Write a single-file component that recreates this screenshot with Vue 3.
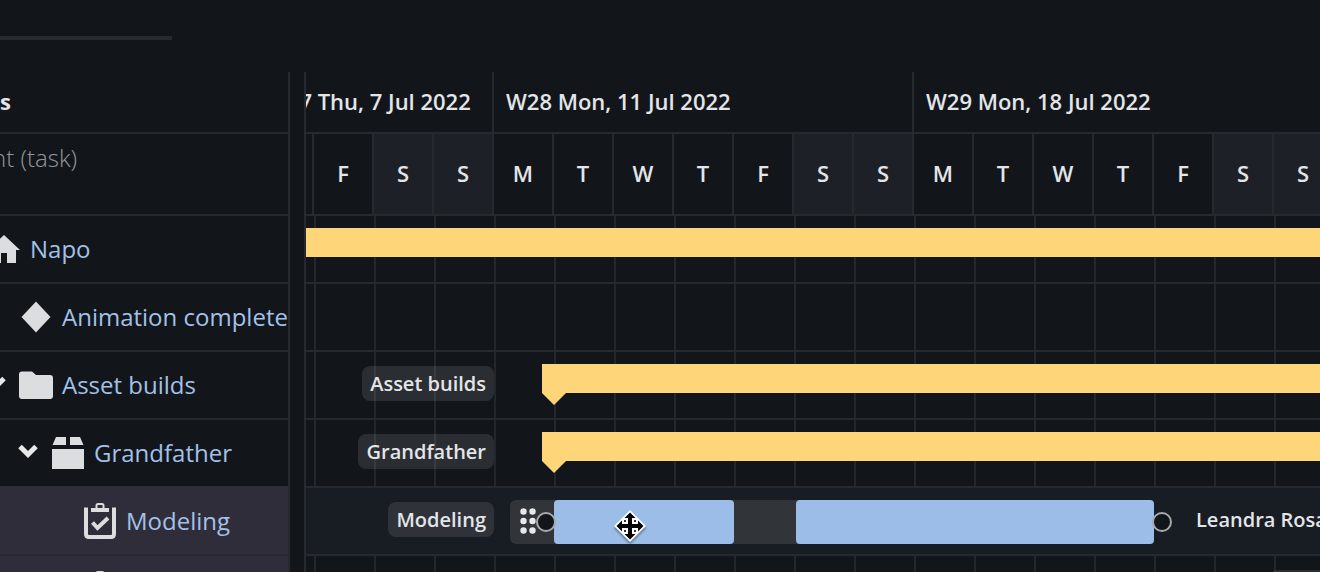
<template>
  <div class="page">
    <div class="topbar">
      <div class="tab-line"></div>
    </div>
    <div class="gantt">
      <div class="list">
        <div class="list-scroll">
          <div class="list-head">s</div>
          <div class="list-filter">
            <input type="text" aria-label="Filter" placeholder="nt (task)">
          </div>
          <div
            class="list-row"
            v-for="row in rows"
            :key="row.id"
            :class="{ selected: row.selected }"
            :style="{ paddingLeft: row.level * 32 + 'px' }"
          >
            <button v-if="row.open" class="toggle" type="button" :aria-label="row.name" @click="selectedId = row.id">
              <svg width="20" height="16" viewBox="0 0 20 16">
                <path d="M2 3.5L10 11.5L18 3.5" fill="none" stroke="currentColor" stroke-width="5" />
              </svg>
            </button>
            <span v-else class="toggle"></span>
            <span class="icon">
              <svg v-if="row.icon === 'home'" width="34" height="28" viewBox="0 0 34 28">
                <path d="M17 0L33 15H29V28H20V18H14V28H5V15H1Z" fill="currentColor" />
              </svg>
              <svg v-else-if="row.icon === 'milestone'" width="30" height="32" viewBox="0 0 30 32">
                <path d="M15 0.5L29.5 16L15 31.5L0.5 16Z" fill="currentColor" />
              </svg>
              <svg v-else-if="row.icon === 'folder'" width="34" height="28" viewBox="0 0 34 28">
                <path d="M3 0.5H13L17 4H31Q34 4 34 7V25Q34 28 31 28H3Q0 28 0 25V3.5Q0 0.5 3 0.5Z" fill="currentColor" />
              </svg>
              <svg v-else-if="row.icon === 'box'" width="32" height="32" viewBox="0 0 32 32">
                <path d="M4 0H14V8H0.5ZM18 0H28L31.5 8H18ZM0 12H32V32H0Z" fill="currentColor" />
              </svg>
              <svg v-else width="32" height="36" viewBox="0 0 32 36">
                <path d="M2 4.5V31Q2 34 5 34H27Q30 34 30 31V4.5" fill="none" stroke="currentColor" stroke-width="4" />
                <path d="M7 5H11.5V2.5Q11.5 0 14 0H18Q20.5 0 20.5 2.5V5H25V9H7ZM13.5 5H18.5V2H13.5Z" fill="currentColor" fill-rule="evenodd" />
                <path d="M8.5 19.5L13.5 25L24 15" fill="none" stroke="currentColor" stroke-width="4" />
              </svg>
            </span>
            <a class="name" href="#" @click.prevent="selectedId = row.id">{{ row.name }}</a>
          </div>
        </div>
      </div>

      <div class="splitter"></div>

      <div class="timeline">
        <div class="timeline-scroll">
          <div class="weeks">
            <div class="week" v-for="week in weeks" :key="week.label" :style="{ width: week.days * dayWidth + 'px' }">
              {{ week.label }}
            </div>
          </div>
          <div class="days">
            <div class="day" v-for="(day, index) in days" :key="index" :class="{ weekend: day === 'S' }">{{ day }}</div>
          </div>
          <div class="lane" v-for="row in rows" :key="row.id" :class="{ active: row.id === selectedId }">
            <div class="cell" v-for="(day, index) in days" :key="index"></div>

            <div v-if="row.summary" class="summary" :style="{ left: row.start + 'px' }">
              <svg class="tip" width="24" height="12" viewBox="0 0 24 12">
                <path d="M0 0H24L12 12Z" fill="currentColor" />
              </svg>
            </div>
            <span v-if="row.tag" class="tag">{{ row.name }}</span>

            <template v-if="row.parts">
              <div class="track" :style="{ left: row.start - 44 + 'px', width: row.length + 44 + 'px' }">
                <svg class="grip" width="16" height="26" viewBox="0 0 16 26">
                  <g fill="#e6e8ea">
                    <circle cx="3.5" cy="3.5" r="3.2" /><circle cx="12.5" cy="3.5" r="3.2" />
                    <circle cx="3.5" cy="13" r="3.2" /><circle cx="12.5" cy="13" r="3.2" />
                    <circle cx="3.5" cy="22.5" r="3.2" /><circle cx="12.5" cy="22.5" r="3.2" />
                  </g>
                </svg>
              </div>
              <div
                class="part"
                v-for="part in row.parts"
                :key="part.left"
                :style="{ left: part.left + 'px', width: part.width + 'px' }"
              ></div>
              <span class="knob" :style="{ left: row.start - 18 + 'px' }"></span>
              <span class="knob" :style="{ left: row.start + row.length - 2 + 'px' }"></span>
              <span class="assignee" :style="{ left: row.start + row.length + 42 + 'px' }">{{ row.assignee }}</span>
              <svg class="move" :style="{ left: row.start + 58 + 'px' }" width="36" height="36" viewBox="0 0 36 36">
                <path d="M18 2L34 18L18 34L2 18Z" fill="#fff" />
                <path
                  d="M18 4.5L23.5 10H20V16H26V12.5L31.5 18L26 23.5V20H20V26H23.5L18 31.5L12.5 26H16V20H10V23.5L4.5 18L10 12.5V16H16V10H12.5Z"
                  fill="#000"
                />
                <path d="M11 11H15V15H11ZM21 11H25V15H21ZM11 21H15V25H11ZM21 21H25V25H21Z" fill="#333" stroke="#fff" stroke-width="2" />
              </svg>
            </template>
            <span v-if="row.chip" class="chip" :style="{ left: row.chip + 'px' }"></span>
          </div>
        </div>
      </div>
    </div>
  </div>
</template>

<script setup>
import { ref } from 'vue'

const dayWidth = 60
const selectedId = ref(5)

const weeks = [
  { label: 'W27 Thu, 7 Jul 2022', days: 4 },
  { label: 'W28 Mon, 11 Jul 2022', days: 7 },
  { label: 'W29 Mon, 18 Jul 2022', days: 7 }
]
const days = [...'TFSS', ...'MTWTFSS', ...'MTWTFSS']

// start / left are measured from the first day of the timeline
const rows = [
  { id: 1, name: 'Napo', level: 0, icon: 'home', summary: true, start: 0 },
  { id: 2, name: 'Animation complete', level: 1, icon: 'milestone' },
  { id: 3, name: 'Asset builds', level: 1, icon: 'folder', open: true, summary: true, start: 288, tag: true },
  { id: 4, name: 'Grandfather', level: 2, icon: 'box', open: true, summary: true, start: 288, tag: true },
  {
    id: 5,
    name: 'Modeling',
    level: 3,
    icon: 'task',
    selected: true,
    tag: true,
    start: 300,
    length: 600,
    parts: [
      { left: 300, width: 180 },
      { left: 542, width: 358 }
    ],
    assignee: 'Leandra Rosa'
  },
  { id: 6, name: '', level: 3, icon: 'task', selected: true, chip: 1016 }
]
</script>

<style>
html,
body {
  background: #12161a;
  overflow: hidden;
}
</style>

<style scoped>
.page {
  height: 100vh;
  overflow: hidden;
  background: #12161a;
  color: #e3e5e8;
  font-family: "Open Sans", sans-serif;
  font-size: 22px;
}
.topbar {
  height: 72px;
  box-sizing: border-box;
  padding-top: 36px;
}
.tab-line {
  width: 172px;
  height: 4px;
  background: #26292d;
}
.gantt {
  display: flex;
}
.list {
  flex: 0 0 288px;
  overflow: hidden;
  border-right: 2px solid #26292d;
}
.list-scroll {
  margin-left: -48px;
}
.list-head {
  height: 60px;
  line-height: 58px;
  padding-left: 48px;
  font-weight: 700;
  border-bottom: 2px solid #26292d;
}
.list-filter {
  height: 80px;
  padding-left: 40px;
  border-bottom: 2px solid #26292d;
}
.list-filter input {
  width: 100%;
  height: 46px;
  padding: 0;
  border: none;
  outline: none;
  background: transparent;
  color: #94979a;
  font-family: inherit;
  font-size: 24px;
  font-weight: 300;
}
.list-filter input::placeholder {
  color: #94979a;
}
.list-row {
  display: flex;
  align-items: center;
  height: 66px;
  border-bottom: 2px solid #26292d;
}
.list-row.selected {
  background: #2f2d39;
  border-bottom-color: #292732;
  box-shadow: 0 -2px #2f2d39;
}
.list-row.selected + .selected {
  box-shadow: none;
}
.toggle {
  flex: none;
  width: 24px;
  height: 24px;
  margin-right: 8px;
  padding: 0 0 4px;
  border: none;
  background: none;
  color: #e6e8ea;
  display: flex;
  align-items: center;
  justify-content: center;
}
.icon {
  flex: none;
  width: 40px;
  margin-right: 6px;
  display: flex;
  justify-content: center;
  color: #dcdddf;
}
.icon svg {
  display: block;
}
.name {
  padding-bottom: 2px;
  color: #a3c1e8;
  font-size: 24px;
  text-decoration: none;
  white-space: nowrap;
}
.splitter {
  flex: 0 0 14px;
  border-right: 2px solid #26292d;
}
.timeline {
  flex: 1;
  min-width: 0;
  overflow: hidden;
}
.timeline-scroll {
  width: 1080px;
  margin-left: -52px;
}
.weeks,
.days {
  display: flex;
  font-weight: 600;
  border-bottom: 2px solid #26292d;
}
.week {
  box-sizing: border-box;
  height: 60px;
  line-height: 58px;
  padding-left: 12px;
  border-right: 2px solid #26292d;
  white-space: nowrap;
}
.day {
  box-sizing: border-box;
  width: 60px;
  height: 80px;
  line-height: 78px;
  text-align: center;
  border-right: 2px solid #26292d;
}
.day.weekend {
  background: #1d2027;
}
.lane {
  position: relative;
  display: flex;
  height: 66px;
  border-bottom: 2px solid #26292d;
}
.cell {
  box-sizing: border-box;
  width: 60px;
  border-left: 2px solid #23262a;
}
.lane.active {
  background: #181c23;
}
.lane.active .cell {
  border-color: transparent;
}
.summary {
  position: absolute;
  top: 12px;
  right: 0;
  height: 29px;
  background: #fed579;
  color: #fed579;
}
.tip {
  position: absolute;
  top: 29px;
  left: 0;
}
.tag {
  position: absolute;
  top: 14px;
  right: 840px;
  height: 35px;
  line-height: 35px;
  padding: 0 8px;
  border-radius: 8px;
  background: rgba(255, 255, 255, 0.1);
  font-size: 20px;
  font-weight: 600;
}
.track {
  position: absolute;
  top: 12px;
  height: 44px;
  border-radius: 6px;
  background: #313439;
}
.grip {
  position: absolute;
  top: 8px;
  left: 10px;
}
.part {
  position: absolute;
  top: 12px;
  height: 44px;
  border-radius: 4px;
  background: #9bbde8;
}
.knob {
  position: absolute;
  top: 24px;
  box-sizing: border-box;
  width: 20px;
  height: 20px;
  border: 2px solid #a7a8aa;
  border-radius: 50%;
  background: #12161a;
}
.assignee {
  position: absolute;
  top: 14px;
  line-height: 35px;
  font-size: 20px;
  font-weight: 600;
  white-space: nowrap;
}
.move {
  position: absolute;
  top: 20px;
  filter: drop-shadow(0 2px 1px rgba(0, 0, 0, 0.4));
}
.chip {
  position: absolute;
  top: 14px;
  width: 120px;
  height: 35px;
  border-radius: 8px;
  background: rgba(255, 255, 255, 0.1);
}
</style>
